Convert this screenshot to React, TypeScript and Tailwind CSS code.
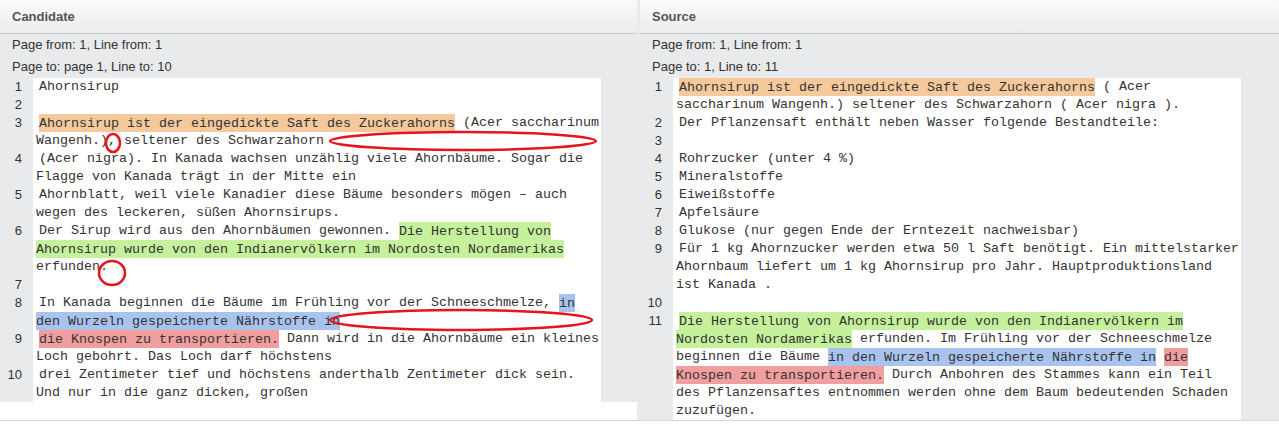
import React from 'react';

const mono = "font-['Liberation_Mono','Courier_New',monospace] text-[13.33px] leading-[18px] text-[#333]";
const sans = "font-['Liberation_Sans',Arial,sans-serif]";

const hl = {
  orange: 'bg-[#f5c99b] py-[1.5px] [box-decoration-break:clone]',
  green: 'bg-[#c5f09c] py-[1.5px] [box-decoration-break:clone]',
  blue: 'bg-[#a9c3ef] py-[1.5px] [box-decoration-break:clone]',
  red: 'bg-[#f09e9e] py-[1.5px] [box-decoration-break:clone]',
};

function Row({ n, children }: { n: number; children?: React.ReactNode }) {
  return (
    <div className="flex">
      <div className={`w-[33px] shrink-0 pr-[11px] text-right text-[13px] leading-[18px] text-[#333] ${sans}`}>{n}</div>
      <div className={`w-[568px] shrink-0 bg-white pl-[3px] indent-[3px] min-h-[18px] ${mono}`}>{children}</div>
    </div>
  );
}

function PanelHead({ title, to }: { title: string; to: string }) {
  return (
    <>
      <div className="h-[34px] flex items-center pl-[12px] border-b border-[#c9c9c9] bg-gradient-to-b from-[#fbfbfb] to-[#ececec]">
        <span className={`text-[13px] font-bold text-[#555] ${sans}`}>{title}</span>
      </div>
      <div className={`pl-[12px] text-[13px] text-[#333] ${sans}`}>
        <div className="h-[22px] flex items-center">Page from: 1, Line from: 1</div>
        <div className="h-[22px] flex items-center">{to}</div>
      </div>
    </>
  );
}

export default function App() {
  return (
    <div className="relative w-[1279px] h-[426px] bg-white overflow-hidden">
      <div className="flex h-[421px] border-b border-[#d6d6d6]">
        {/* candidate */}
        <div className="w-[637px] shrink-0 flex flex-col bg-[#e9eaec]">
          <PanelHead title="Candidate" to="Page to: page 1, Line to: 10" />
          <div className="h-[324px] overflow-hidden">
            <Row n={1}>Ahornsirup</Row>
            <Row n={2} />
            <Row n={3}>
              <span className={hl.orange}>Ahornsirup ist der eingedickte Saft des Zuckerahorns</span> (Acer saccharinum Wangenh.), seltener des Schwarzahorn
            </Row>
            <Row n={4}>(Acer nigra). In Kanada wachsen unzählig viele Ahornbäume. Sogar die Flagge von Kanada trägt in der Mitte ein</Row>
            <Row n={5}>Ahornblatt, weil viele Kanadier diese Bäume besonders mögen – auch wegen des leckeren, süßen Ahornsirups.</Row>
            <Row n={6}>
              Der Sirup wird aus den Ahornbäumen gewonnen.{' '}
              <span className={hl.green}>Die Herstellung von Ahornsirup wurde von den Indianervölkern im Nordosten Nordamerikas</span> erfunden.
            </Row>
            <Row n={7} />
            <Row n={8}>
              In Kanada beginnen die Bäume im Frühling vor der Schneeschmelze,{' '}
              <span className={hl.blue}>in den Wurzeln gespeicherte Nährstoffe in</span>
            </Row>
            <Row n={9}>
              <span className={hl.red}>die Knospen zu transportieren.</span> Dann wird in die Ahornbäume ein kleines Loch gebohrt. Das Loch darf höchstens
            </Row>
            <Row n={10}>drei Zentimeter tief und höchstens anderthalb Zentimeter dick sein. Und nur in die ganz dicken, großen</Row>
          </div>
          <div className="flex-1 bg-white" />
        </div>

        {/* source */}
        <div className="flex-1 flex flex-col bg-[#e9eaec] pl-[3px]">
          <PanelHead title="Source" to="Page to: 1, Line to: 11" />
          <div className="flex-1 overflow-hidden">
            <Row n={1}>
              <span className={hl.orange}>Ahornsirup ist der eingedickte Saft des Zuckerahorns</span> ( Acer saccharinum Wangenh.) seltener des Schwarzahorn ( Acer nigra ).
            </Row>
            <Row n={2}>Der Pflanzensaft enthält neben Wasser folgende Bestandteile:</Row>
            <Row n={3} />
            <Row n={4}>Rohrzucker (unter 4 %)</Row>
            <Row n={5}>Mineralstoffe</Row>
            <Row n={6}>Eiweißstoffe</Row>
            <Row n={7}>Apfelsäure</Row>
            <Row n={8}>Glukose (nur gegen Ende der Erntezeit nachweisbar)</Row>
            <Row n={9}>Für 1 kg Ahornzucker werden etwa 50 l Saft benötigt. Ein mittelstarker Ahornbaum liefert um 1 kg Ahornsirup pro Jahr. Hauptproduktionsland ist Kanada .</Row>
            <Row n={10} />
            <Row n={11}>
              <span className={hl.green}>Die Herstellung von Ahornsirup wurde von den Indianervölkern im Nordosten Nordamerikas</span> erfunden. Im Frühling vor der Schneeschmelze beginnen die Bäume{' '}
              <span className={hl.blue}>in den Wurzeln gespeicherte Nährstoffe in</span>{' '}
              <span className={hl.red}>die Knospen zu transportieren.</span> Durch Anbohren des Stammes kann ein Teil des Pflanzensaftes entnommen werden ohne dem Baum bedeutenden Schaden zuzufügen.
            </Row>
          </div>
        </div>
      </div>

      {/* review marks drawn over the candidate text */}
      <svg className="absolute left-0 top-0 pointer-events-none" width="1279" height="426" viewBox="0 0 1279 426">
        <g fill="none" stroke="#e8141c" strokeWidth="2.5">
          <ellipse cx="463" cy="141" rx="133" ry="9" />
          <ellipse cx="113" cy="143" rx="7" ry="9" />
          <ellipse cx="112" cy="273" rx="13" ry="12" />
          <ellipse cx="461" cy="320" rx="131" ry="10" />
        </g>
      </svg>
    </div>
  );
}
